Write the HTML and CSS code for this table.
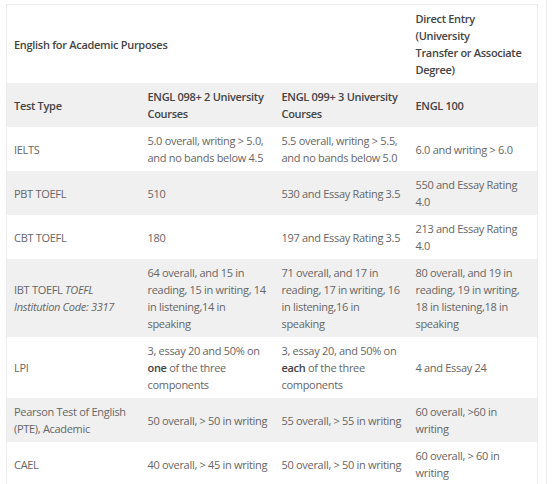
FILE: index.html
```html
<!DOCTYPE html>
<html>
<head>
<meta charset="utf-8">
<link rel="stylesheet" href="styles.css">
</head>
<body>
<div class="frame">
<table class="req">
  <colgroup>
    <col class="c1"><col class="c2"><col class="c3"><col class="c4">
  </colgroup>
  <tr class="head1">
    <th colspan="3">English for Academic Purposes</th>
    <th>Direct Entry (University<br>Transfer or Associate Degree)</th>
  </tr>
  <tr class="head2 alt">
    <th>Test Type</th>
    <th>ENGL 098+ 2 University Courses</th>
    <th>ENGL 099+ 3 University Courses</th>
    <th>ENGL 100</th>
  </tr>
  <tr>
    <td>IELTS</td>
    <td>5.0 overall, writing &gt; 5.0, and no bands below 4.5</td>
    <td>5.5 overall, writing &gt; 5.5, and no bands below 5.0</td>
    <td>6.0 and writing &gt; 6.0</td>
  </tr>
  <tr class="alt">
    <td>PBT TOEFL</td>
    <td>510</td>
    <td>530 and Essay Rating 3.5</td>
    <td>550 and Essay Rating 4.0</td>
  </tr>
  <tr>
    <td>CBT TOEFL</td>
    <td>180</td>
    <td>197 and Essay Rating 3.5</td>
    <td>213 and Essay Rating 4.0</td>
  </tr>
  <tr class="alt">
    <td>IBT TOEFL <em>TOEFL Institution Code: 3317</em></td>
    <td>64 overall, and 15 in reading, 15 in writing, 14 in listening,14 in speaking</td>
    <td>71 overall, and 17 in reading, 17 in writing, 16 in listening,16 in speaking</td>
    <td>80 overall, and 19 in reading, 19 in writing, 18 in listening,18 in speaking</td>
  </tr>
  <tr>
    <td>LPI</td>
    <td>3, essay 20 and 50% on <strong>one</strong> of the three components</td>
    <td>3, essay 20, and 50% on <strong>each</strong> of the three components</td>
    <td>4 and Essay 24</td>
  </tr>
  <tr class="alt">
    <td>Pearson Test of English (PTE), Academic</td>
    <td>50 overall, &gt; 50 in writing</td>
    <td>55 overall, &gt; 55 in writing</td>
    <td>60 overall, &gt;60 in writing</td>
  </tr>
  <tr>
    <td>CAEL</td>
    <td>40 overall, &gt; 45 in writing</td>
    <td>50 overall, &gt; 50 in writing</td>
    <td>60 overall, &gt; 60 in writing</td>
  </tr>
</table>
</div>
</body>
</html>
```
FILE: styles.css
```css
html, body {
  margin: 0;
  padding: 0;
  background: #ffffff;
}
.frame {
  width: 540px;
  padding: 4px 0 0 6px;
  border-right: 1px solid #ececec;
  height: 480px;
  overflow: hidden;
}
.req {
  width: 531px;
  border-collapse: collapse;
  table-layout: fixed;
  border: 1px solid #ececec;
  font-family: "Open Sans", "Liberation Sans", sans-serif;
  font-size: 11px;
  letter-spacing: -0.3px;
  line-height: 17px;
  color: #666666;
}
.c1, .c2, .c3 { width: 134px; }
.c4 { width: 129px; }
.req th, .req td {
  text-align: left;
  vertical-align: middle;
  padding: 5px 7px;
}
.req th {
  font-weight: 600;
  color: #444444;
}
.head1 th:last-child {
  padding-right: 14px;
}
.req strong {
  font-weight: 600;
  color: #444444;
}
.req em {
  font-style: italic;
}
.alt {
  background: #f0f0f0;
}
```
